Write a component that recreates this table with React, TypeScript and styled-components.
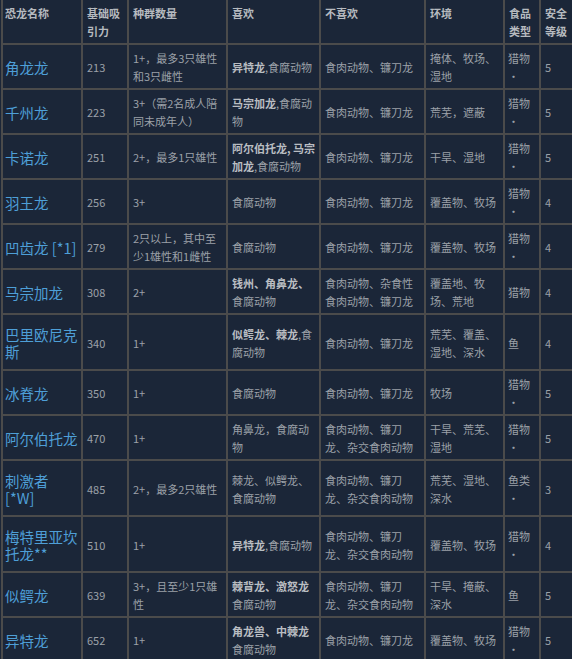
import React from "react";
import { styled, createGlobalStyle } from "styled-components";

const GlobalStyle = createGlobalStyle`
  html, body {
    margin: 0;
    padding: 0;
    background: #1b2638;
  }
  body {
    font-family: "Noto Sans CJK SC", "Noto Sans", sans-serif;
  }
`;

interface Dino {
  name: string;
  attract: number;
  group: string;
  likes: React.ReactNode;
  dislikes: string;
  env: string;
  food: string;
  safety: number;
}

const B = styled.b`
  font-weight: 700;
  color: #b9bdc2;
`;

const rows: Dino[] = [
  {
    name: "角龙龙",
    attract: 213,
    group: "1+，最多3只雄性\n和3只雌性",
    likes: (
      <>
        <B>异特龙</B>,食腐动物
      </>
    ),
    dislikes: "食肉动物、镰刀龙",
    env: "掩体、牧场、\n湿地",
    food: "猎物\n•",
    safety: 5,
  },
  {
    name: "千州龙",
    attract: 223,
    group: "3+（需2名成人陪\n同未成年人）",
    likes: (
      <>
        <B>马宗加龙</B>,食腐动{"\n"}物
      </>
    ),
    dislikes: "食肉动物、镰刀龙",
    env: "荒芜，遮蔽",
    food: "猎物\n•",
    safety: 5,
  },
  {
    name: "卡诺龙",
    attract: 251,
    group: "2+，最多1只雄性",
    likes: (
      <>
        <B>阿尔伯托龙, 马宗{"\n"}加龙</B>,食腐动物
      </>
    ),
    dislikes: "食肉动物、镰刀龙",
    env: "干旱、湿地",
    food: "猎物\n•",
    safety: 5,
  },
  {
    name: "羽王龙",
    attract: 256,
    group: "3+",
    likes: "食腐动物",
    dislikes: "食肉动物、镰刀龙",
    env: "覆盖物、牧场",
    food: "猎物\n•",
    safety: 4,
  },
  {
    name: "凹齿龙 [*1]",
    attract: 279,
    group: "2只以上，其中至\n少1雄性和1雌性",
    likes: "食腐动物",
    dislikes: "食肉动物、镰刀龙",
    env: "覆盖物、牧场",
    food: "猎物\n•",
    safety: 4,
  },
  {
    name: "马宗加龙",
    attract: 308,
    group: "2+",
    likes: (
      <>
        <B>钱州、角鼻龙、</B>
        {"\n"}食腐动物
      </>
    ),
    dislikes: "食肉动物、杂食性\n食肉动物、镰刀龙",
    env: "覆盖地、牧\n场、荒地",
    food: "猎物",
    safety: 4,
  },
  {
    name: "巴里欧尼克\n斯",
    attract: 340,
    group: "1+",
    likes: (
      <>
        <B>似鳄龙、棘龙</B>,食{"\n"}腐动物
      </>
    ),
    dislikes: "食肉动物、镰刀龙",
    env: "荒芜、覆盖、\n湿地、深水",
    food: "鱼",
    safety: 4,
  },
  {
    name: "冰脊龙",
    attract: 350,
    group: "1+",
    likes: "食腐动物",
    dislikes: "食肉动物、镰刀龙",
    env: "牧场",
    food: "猎物\n•",
    safety: 5,
  },
  {
    name: "阿尔伯托龙",
    attract: 470,
    group: "1+",
    likes: "角鼻龙，食腐动\n物",
    dislikes: "食肉动物、镰刀\n龙、杂交食肉动物",
    env: "干旱、荒芜、\n湿地",
    food: "猎物\n•",
    safety: 5,
  },
  {
    name: "刺激者\n[*W]",
    attract: 485,
    group: "2+，最多2只雄性",
    likes: "棘龙、似鳄龙、\n食腐动物",
    dislikes: "食肉动物、镰刀\n龙、杂交食肉动物",
    env: "荒芜、湿地、\n深水",
    food: "鱼类\n•",
    safety: 3,
  },
  {
    name: "梅特里亚坎\n托龙**",
    attract: 510,
    group: "1+",
    likes: (
      <>
        <B>异特龙</B>,食腐动物
      </>
    ),
    dislikes: "食肉动物、镰刀\n龙、杂交食肉动物",
    env: "覆盖物、牧场",
    food: "猎物\n•",
    safety: 4,
  },
  {
    name: "似鳄龙",
    attract: 639,
    group: "3+，且至少1只雄\n性",
    likes: (
      <>
        <B>棘背龙、激怒龙</B>
        {"\n"}食腐动物
      </>
    ),
    dislikes: "食肉动物、镰刀\n龙、杂交食肉动物",
    env: "干旱、掩蔽、\n深水",
    food: "鱼",
    safety: 5,
  },
  {
    name: "异特龙",
    attract: 652,
    group: "1+",
    likes: (
      <>
        <B>角龙兽、中棘龙</B>
        {"\n"}食腐动物
      </>
    ),
    dislikes: "食肉动物、镰刀龙",
    env: "覆盖物、牧场",
    food: "猎物\n•",
    safety: 5,
  },
];

const headers: { label: string; width: number }[] = [
  { label: "恐龙名称", width: 78 },
  { label: "基础吸\n引力", width: 44 },
  { label: "种群数量", width: 97 },
  { label: "喜欢", width: 91 },
  { label: "不喜欢", width: 103 },
  { label: "环境", width: 77 },
  { label: "食品\n类型", width: 34 },
  { label: "安全\n等级", width: 44 },
];

const App = () => {
  return (
    <>
      <GlobalStyle />
      <Page>
        <Table>
          <thead>
            <tr>
              {headers.map((h, i) => (
                <HeadCell key={h.label} $width={h.width} $first={i === 0}>
                  {h.label}
                </HeadCell>
              ))}
            </tr>
          </thead>
          <tbody>
            {rows.map((r) => (
              <tr key={r.name}>
                <NameCell>{r.name}</NameCell>
                <Cell>{r.attract}</Cell>
                <Cell>{r.group}</Cell>
                <Cell>{r.likes}</Cell>
                <Cell>{r.dislikes}</Cell>
                <Cell>{r.env}</Cell>
                <FoodCell>{r.food}</FoodCell>
                <Cell>{r.safety}</Cell>
              </tr>
            ))}
          </tbody>
        </Table>
      </Page>
    </>
  );
};

const Page = styled.div`
  width: 572px;
  height: 659px;
  overflow: hidden;
  background: #1b2638;
`;

const Table = styled.table`
  margin: -2px 0 0 1px;
  border-collapse: separate;
  border-spacing: 2px;
  background: #4b4b4b;
  table-layout: fixed;
  width: 586px;
`;

const HeadCell = styled.th<{ $width: number; $first?: boolean }>`
  box-sizing: border-box;
  width: ${(p) => p.$width}px;
  padding: 4px 4px 3px ${(p) => (p.$first ? 2 : 4)}px;
  background: #1b2638;
  color: #b6babf;
  font-size: 11px;
  font-weight: 700;
  line-height: 18px;
  text-align: left;
  vertical-align: top;
  white-space: pre;
`;

const Cell = styled.td`
  box-sizing: border-box;
  padding: 4px 4px 3px;
  background: #1b2638;
  color: #9ba1a8;
  font-size: 11px;
  line-height: 18px;
  vertical-align: middle;
  white-space: pre;
  overflow: hidden;
`;

const NameCell = styled(Cell)`
  padding: 11px 2px 9px;
  color: #4e9fd7;
  font-size: 14.5px;
  line-height: 17px;
`;

const FoodCell = styled(Cell)`
  padding-left: 3px;
  padding-right: 0;
`;

export default App;
